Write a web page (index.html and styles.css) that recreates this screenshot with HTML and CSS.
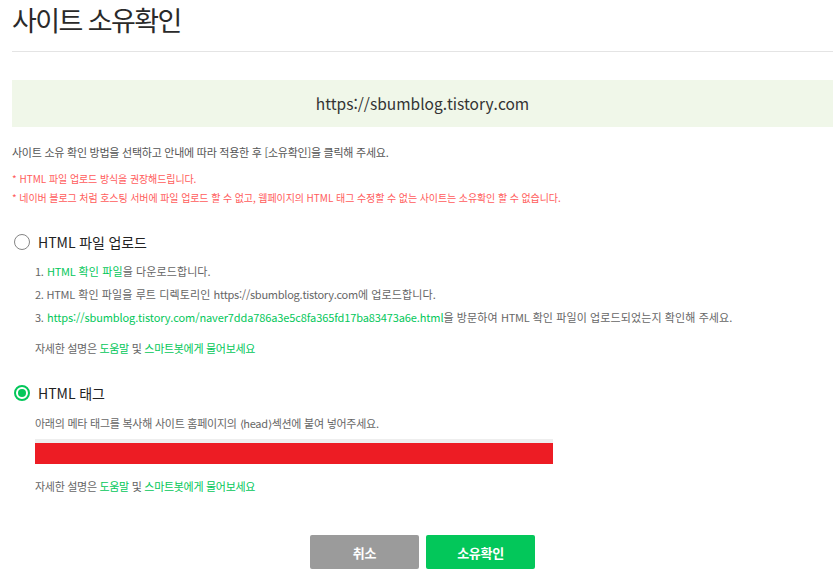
FILE: index.html
```html
<!DOCTYPE html>
<html lang="ko">
<head>
<meta charset="utf-8">
<title>사이트 소유확인</title>
<link rel="stylesheet" href="styles.css">
</head>
<body>
<div class="page">
  <h1 class="title">사이트 소유확인</h1>
  <div class="site-box"><span class="en">https://sbumblog.tistory.com</span></div>
  <p class="desc">사이트 소유 확인 방법을 선택하고 안내에 따라 적용한 후 [소유확인]을 클릭해 주세요.</p>
  <div class="notes">
    <p class="note"><span class="en">* HTML</span> 파일 업로드 방식을 권장해드립니다.</p>
    <p class="note"><span class="en">*</span> 네이버 블로그 처럼 호스팅 서버에 파일 업로드 할 수 없고, 웹페이지의 <span class="en">HTML</span> 태그 수정할 수 없는 사이트는 소유확인 할 수 없습니다.</p>
  </div>

  <section class="method method-file">
    <div class="radio-row">
      <span class="radio"></span>
      <span class="radio-label"><span class="en">HTML</span> 파일 업로드</span>
    </div>
    <ol class="steps">
      <li><span class="en">1.</span> <span class="link"><span class="en">HTML</span> 확인 파일</span>을 다운로드합니다.</li>
      <li><span class="en">2. HTML</span> 확인 파일을 루트 디렉토리인 <span class="en">https://sbumblog.tistory.com</span>에 업로드합니다.</li>
      <li><span class="en">3.</span> <span class="link url">https://sbumblog.tistory.com/naver7dda786a3e5c8fa365fd17ba83473a6e.html</span>을 방문하여 <span class="en">HTML</span> 확인 파일이 업로드되었는지 확인해 주세요.</li>
    </ol>
    <p class="help">자세한 설명은 <span class="link">도움말</span> 및 <span class="link">스마트봇에게 물어보세요</span></p>
  </section>

  <section class="method method-tag">
    <div class="radio-row">
      <span class="radio checked"></span>
      <span class="radio-label"><span class="en">HTML</span> 태그</span>
    </div>
    <p class="meta-desc">아래의 메타 태그를 복사해 사이트 홈페이지의 <span class="en">⟨head⟩</span>섹션에 붙여 넣어주세요.</p>
    <div class="code-box"></div>
    <p class="help help-tag">자세한 설명은 <span class="link">도움말</span> 및 <span class="link">스마트봇에게 물어보세요</span></p>
  </section>

  <div class="actions">
    <button class="btn btn-cancel" type="button">취소</button>
    <button class="btn btn-confirm" type="button">소유확인</button>
  </div>
</div>
</body>
</html>
```

FILE: styles.css
```css
* { box-sizing: border-box; }

body {
  margin: 0;
  background: #ffffff;
  font-family: "Noto Sans CJK KR", "Noto Sans", sans-serif;
  color: #555555;
}

.page {
  padding: 0 6px 0 12px;
}

.en { letter-spacing: -0.25px; }

p { margin: 0; }

.title {
  margin: 0;
  height: 52px;
  padding-bottom: 11px;
  line-height: 40px;
  font-size: 27px;
  font-weight: normal;
  letter-spacing: -1.6px;
  color: #2a2a2a;
  border-bottom: 1px solid #e4e4e4;
}

.site-box {
  margin-top: 28px;
  height: 47px;
  line-height: 47px;
  background: #f0f7e9;
  text-align: center;
  font-size: 15.5px;
  color: #333333;
}

.site-box .en { letter-spacing: 0; }

.desc {
  margin-top: 15px;
  line-height: 20px;
  font-size: 11px;
  letter-spacing: -0.25px;
  color: #555555;
}

.notes { margin-top: 7px; }

.note {
  line-height: 19px;
  font-size: 10px;
  letter-spacing: -0.1px;
  color: #ff5c5c;
}

.note .en { letter-spacing: 0; }

.method { margin-top: 23px; }

.radio-row {
  display: flex;
  align-items: center;
  height: 24px;
  padding-left: 2px;
  gap: 8px;
}

.radio {
  width: 16px;
  height: 16px;
  border-radius: 50%;
  border: 1.5px solid #858585;
  display: flex;
  align-items: center;
  justify-content: center;
  flex: none;
}

.radio.checked {
  border: 2px solid #03c75a;
}

.radio.checked::after {
  content: "";
  width: 8px;
  height: 8px;
  border-radius: 50%;
  background: #03c75a;
}

.radio-label {
  font-size: 14px;
  color: #222222;
  letter-spacing: -0.15px;
  line-height: 24px;
}

.radio-label .en { letter-spacing: 0; }

.steps {
  list-style: none;
  margin: 6px 0 0;
  padding: 0 0 0 23px;
}

.steps li {
  line-height: 23px;
  font-size: 11px;
  letter-spacing: 0.1px;
  color: #666666;
}

.link { color: #03c75a; }

.url { letter-spacing: -0.11px; }

.help {
  margin-top: 9px;
  padding-left: 23px;
  line-height: 20px;
  font-size: 11px;
  letter-spacing: -0.3px;
  color: #666666;
}

.meta-desc {
  margin-top: 8px;
  padding-left: 23px;
  line-height: 20px;
  font-size: 11px;
  letter-spacing: -0.25px;
  color: #666666;
}

.code-box {
  margin: 6px 0 0 23px;
  width: 518px;
  height: 25px;
  border-top: 4px solid #eeeeee;
  background: #ed1c24;
}

.help-tag { margin-top: 12px; }

.actions {
  margin-top: 39px;
  display: flex;
  justify-content: center;
  gap: 7px;
}

.btn {
  width: 109px;
  height: 34px;
  border: 0;
  border-radius: 2px;
  font-family: "Noto Sans CJK KR", sans-serif;
  font-size: 13px;
  font-weight: bold;
  color: #ffffff;
  letter-spacing: -0.3px;
  cursor: pointer;
}

.btn-cancel { background: #9b9b9b; }
.btn-confirm { background: #03c75a; }
```
